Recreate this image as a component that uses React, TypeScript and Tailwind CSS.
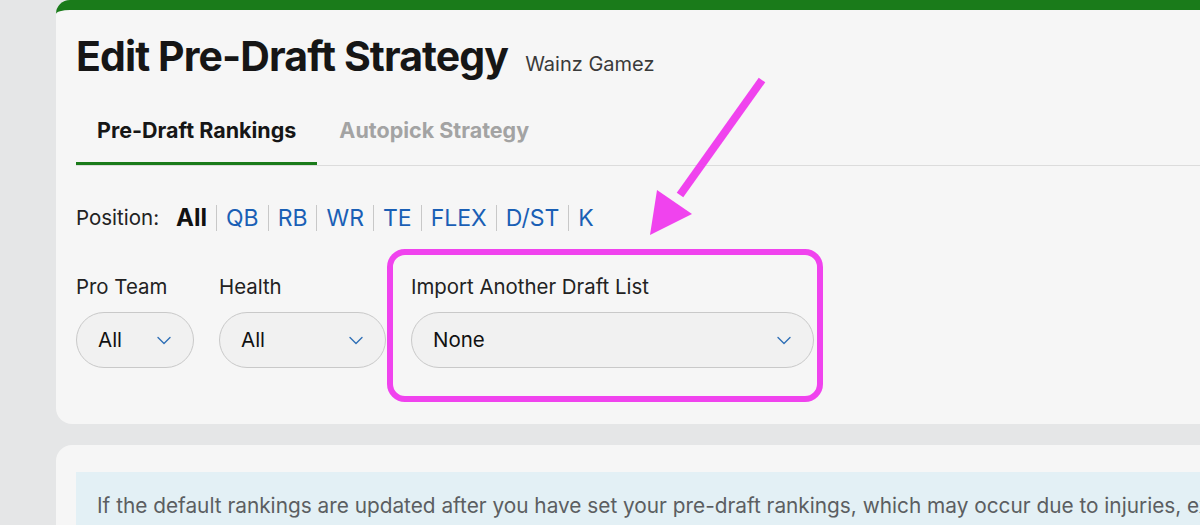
import React from "react";

const Chevron = () => (
  <svg width="14" height="9" viewBox="0 0 14 9" fill="none">
    <path d="M1 1.5 L7 7.5 L13 1.5" stroke="#2f6fb6" strokeWidth="1.4" strokeLinecap="round" strokeLinejoin="round" />
  </svg>
);

const Select = ({ value, w }: { value: string; w: string }) => (
  <div className={`flex h-[56px] ${w} items-center justify-between rounded-full border border-[#c9c9c9] bg-[#f1f1f1] pl-[21px] pr-[22px] text-[20.5px] text-[#111]`}>
    <span>{value}</span>
    <Chevron />
  </div>
);

export default function App() {
  const positions = ["QB", "RB", "WR", "TE", "FLEX", "D/ST", "K"];
  return (
    <div
      className="relative h-[525px] w-[1200px] overflow-hidden bg-[#e5e6e7] pl-[56px]"
      style={{ fontFamily: "Inter, Roboto, 'Liberation Sans', sans-serif" }}
    >
      <div className="w-[1180px] rounded-tl-[14px] rounded-bl-[16px] border-t-[10px] border-[#1a7b1a] bg-[#f6f6f6] pb-[56px]">
        <div className="flex items-baseline gap-[17px] pl-[20px] pt-[22px]">
          <h1 className="text-[41px] font-bold leading-[48px] tracking-[-0.9px] text-[#161616]">Edit Pre-Draft Strategy</h1>
          <span className="text-[20px] text-[#3a3a3a]">Wainz Gamez</span>
        </div>
        <div className="mt-[36px] ml-[20px] flex border-b border-[#dcdcdc]">
          <div className="border-b-[3px] border-[#1a7b1a] px-[21px] pb-[18px] text-[21.5px] font-bold leading-[28px] text-[#161616]">Pre-Draft Rankings</div>
          <div className="px-[22px] pb-[18px] text-[21.5px] font-bold leading-[28px] text-[#a3a3a3]">Autopick Strategy</div>
        </div>
        <div className="mt-[37px] ml-[20px] flex items-center text-[20.5px] leading-[30px]">
          <span className="text-[#222]">Position:</span>
          <span className="ml-[17px] text-[24px] font-bold text-[#111]">All</span>
          {positions.map((p) => (
            <React.Fragment key={p}>
              <span className="mx-[9px] h-[26px] w-px bg-[#c8c8c8]" />
              <span className="text-[23px] text-[#1a5fb5]">{p}</span>
            </React.Fragment>
          ))}
        </div>
        <div className="mt-[40px] ml-[20px] flex gap-[25px]">
          <div className="flex flex-col gap-[11px]">
            <span className="text-[20.4px] leading-[28px] text-[#222]">Pro Team</span>
            <Select value="All" w="w-[118px]" />
          </div>
          <div className="flex flex-col gap-[11px]">
            <span className="text-[20.4px] leading-[28px] text-[#222]">Health</span>
            <Select value="All" w="w-[167px]" />
          </div>
          <div className="flex flex-col gap-[11px]">
            <span className="text-[20.4px] leading-[28px] text-[#222]">Import Another Draft List</span>
            <Select value="None" w="w-[403px]" />
          </div>
        </div>
      </div>
      <div className="mt-[21px] w-[1180px] rounded-tl-[16px] bg-[#f6f6f6] pl-[20px] pt-[27px]">
        <div className="bg-[#e3f0f5] pl-[21px] pt-[19px] pb-[10px] text-[20.8px] leading-[30px] text-[#5b5e61] whitespace-nowrap">
          <p>If the default rankings are updated after you have set your pre-draft rankings, which may occur due to injuries, exceptional performances,</p>
          <p>or other factors, we do not automatically update your rankings to ensure your draft strategy is preserved.</p>
        </div>
      </div>

      {/* Annotation overlay */}
      <div className="pointer-events-none absolute left-[387px] top-[249px] h-[153px] w-[436px] rounded-[18px] border-[6px] border-[#f043ee]" />
      <svg className="pointer-events-none absolute left-0 top-0" width="1200" height="525">
        <line x1="762" y1="80" x2="680" y2="195" stroke="#f043ee" strokeWidth="8" />
        <polygon points="650,235 657,190 692,214" fill="#f043ee" />
      </svg>
    </div>
  );
}
